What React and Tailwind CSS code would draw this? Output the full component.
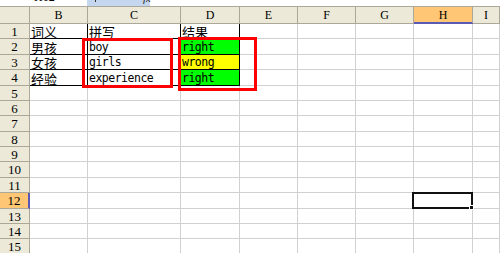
import React from "react";

const cols = ["B", "C", "D", "E", "F", "G", "H", "I"];
const gridCols = "grid grid-cols-[30px_58px_93px_59px_58px_58px_58px_59px_1fr]";

const rows = [
    { n: 1, h: "h-[15px]", B: "词义", C: "拼写", D: "结果" },
    { n: 2, h: "h-[16px]", B: "男孩", C: "boy", D: "right", fill: "bg-[#00ff00]" },
    { n: 3, h: "h-[15px]", B: "女孩", C: "girls", D: "wrong", fill: "bg-[#ffff00]" },
    { n: 4, h: "h-[16px]", B: "经验", C: "experience", D: "right", fill: "bg-[#00ff00]" },
    { n: 5, h: "h-[15px]" },
    { n: 6, h: "h-[15px]" },
    { n: 7, h: "h-[16px]" },
    { n: 8, h: "h-[15px]" },
    { n: 9, h: "h-[15px]" },
    { n: 10, h: "h-[16px]" },
    { n: 11, h: "h-[15px]" },
    { n: 12, h: "h-[16px]", active: true },
    { n: 13, h: "h-[15px]" },
    { n: 14, h: "h-[15px]" },
    { n: 15, h: "h-[15px]" },
];

const headFont = { fontFamily: '"Liberation Serif", serif' };

export default function App() {
    return (
        <div className="relative w-[500px] h-[253px] overflow-hidden bg-white select-none">
            {/* formula bar, mostly scrolled off */}
            <div className="flex h-[7px] border-b border-[#aca899] overflow-hidden">
                <div className="w-[87px] relative">
                    <span
                        className="absolute left-[34px] -top-[9px] text-[12px] leading-[12px] text-black"
                        style={headFont}
                    >
                        H12
                    </span>
                </div>
                <div className="w-[63px] relative bg-[#c5d6ef]">
                    <span className="absolute left-[8px] top-0 w-[1px] h-[2px] bg-[#333]" />
                    <span
                        className="absolute left-[56px] -top-[8px] text-[11px] italic leading-[12px] text-[#222]"
                        style={headFont}
                    >
                        fx
                    </span>
                </div>
                <div className="flex-1" />
            </div>

            {/* column headers */}
            <div className={`${gridCols} h-[17px]`}>
                <div className="bg-[#ece9d8] border-r border-b border-[#aca899]" />
                {cols.map((c) =>
                    c === "H" ? (
                        <div
                            key={c}
                            className="bg-[#ffc675] border-r border-[#aca899] border-b-2 border-b-[#5a5ab4] flex items-center justify-center text-[12px] leading-none text-black"
                            style={headFont}
                        >
                            {c}
                        </div>
                    ) : (
                        <div
                            key={c}
                            className="bg-[#ece9d8] border-r border-b border-[#aca899] flex items-center justify-center text-[12px] leading-none text-black"
                            style={headFont}
                        >
                            {c}
                        </div>
                    )
                )}
            </div>

            {/* rows */}
            {rows.map((r) => (
                <div key={r.n} className={`${gridCols} ${r.h}`}>
                    <div
                        className={
                            r.active
                                ? "bg-[#ffc675] border-r-2 border-r-[#5a5ab4] border-b border-b-[#aca899] flex items-center justify-center text-[13px] leading-none text-black"
                                : "bg-[#ece9d8] border-r border-b border-[#aca899] flex items-center justify-center text-[13px] leading-none text-black"
                        }
                        style={headFont}
                    >
                        {r.n}
                    </div>
                    {cols.map((c) => {
                        const inTable = r.n <= 4 && (c === "B" || c === "C" || c === "D");
                        const text = r[c];
                        const isCjk = r.n === 1 || c === "B";
                        return (
                            <div
                                key={c}
                                className={`${
                                    inTable
                                        ? "border-r border-b border-black"
                                        : "border-r border-b border-[#d0d0d0]"
                                } ${c === "D" && r.fill ? r.fill : ""} overflow-hidden whitespace-nowrap pl-[1px] flex items-end`}
                            >
                                {text &&
                                    (isCjk ? (
                                        <span
                                            className="text-[13px] leading-[13px] text-black"
                                            style={{ fontFamily: '"Noto Sans CJK SC", sans-serif' }}
                                        >
                                            {text}
                                        </span>
                                    ) : (
                                        <span
                                            className="text-[11.5px] leading-[13px] tracking-[-0.5px] text-black"
                                            style={{ fontFamily: '"DejaVu Sans Mono", monospace' }}
                                        >
                                            {text}
                                        </span>
                                    ))}
                            </div>
                        );
                    })}
                </div>
            ))}

            {/* red annotation boxes */}
            <div className="absolute left-[82px] top-[38px] w-[91px] h-[50px] border-[3px] border-[#ff0000]" />
            <div className="absolute left-[178px] top-[37px] w-[79px] h-[54px] border-[3px] border-[#ff0000]" />

            {/* active cell H12 */}
            <div className="absolute left-[412px] top-[192px] w-[61px] h-[17px] border-2 border-[#111]" />
            <div className="absolute left-[469px] top-[205px] w-[5px] h-[5px] bg-[#111] border border-white" />
        </div>
    );
}
